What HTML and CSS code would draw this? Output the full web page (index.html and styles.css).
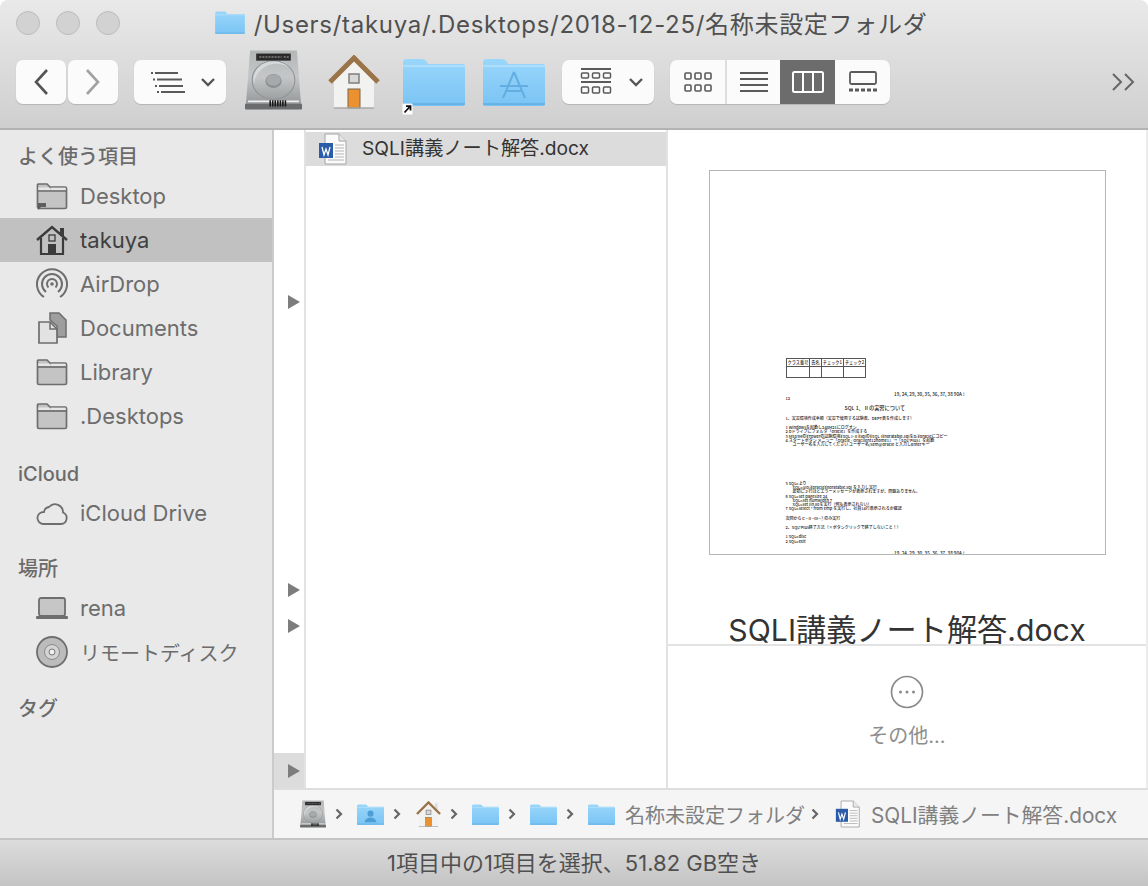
FILE: index.html
```html
<!DOCTYPE html>
<html lang="ja">
<head>
    <meta charset="UTF-8">
    <title>名称未設定フォルダ</title>
    <link rel="stylesheet" href="styles.css">
</head>
<body>

<svg class="defs" width="0" height="0">
    <defs>
        <linearGradient id="blue" x1="0" y1="0" x2="0" y2="1">
            <stop offset="0" stop-color="#9ad6fb"/>
            <stop offset="1" stop-color="#79c4f4"/>
        </linearGradient>
        <linearGradient id="metal" x1="0" y1="0" x2="0" y2="1">
            <stop offset="0" stop-color="#b4b7b8"/>
            <stop offset="0.5" stop-color="#c4c6c7"/>
            <stop offset="1" stop-color="#96999b"/>
        </linearGradient>
    </defs>
    <symbol id="folder" viewBox="0 0 62 48">
        <path d="M0 5 Q0 1 3 1 H19 Q22 1 24 4 L25 6 H60 Q62 6 62 8 V46 Q62 48 60 48 H2 Q0 48 0 46Z" fill="url(#blue)"/>
        <path d="M0 8 H62" stroke="#b6e2fc" stroke-width="1.500"/>
        <path d="M0 46 H62" stroke="#63aee2" stroke-width="1.500"/>
    </symbol>
    <symbol id="disk" viewBox="0 0 56 60">
        <path d="M5 1 H51 L55 53 H1Z" fill="url(#metal)"/>
        <path d="M9 34 A20 20 0 0 1 46 20 A22 22 0 0 0 9 34Z" fill="#d6d8d9"/>
        <ellipse cx="28" cy="30" rx="21" ry="19" fill="none" stroke="#8f9294"/>
        <ellipse cx="28" cy="31" rx="8" ry="7" fill="#8e9193"/>
        <ellipse cx="28" cy="30" rx="7" ry="5.500" fill="#a7aaac"/>
        <rect x="11" y="4" width="34" height="7" fill="#2b2b2b"/>
        <path d="M14 7.500 H36 M38 7.500 H43" stroke="#aaa" stroke-dasharray="2 1"/>
        <rect x="0" y="53" width="56" height="6" rx="1" fill="#6a6c6e"/>
        <path d="M3 51 H53" stroke="#efefef" stroke-width="1.500"/>
        <path d="M24 53 H41" stroke="#181818" stroke-width="6" stroke-dasharray="1.500 1"/>
    </symbol>
    <symbol id="house" viewBox="0 0 52 54">
        <path d="M6 24 L26 5 L46 24 V53 H6Z" fill="#f2f2f0"/>
        <rect x="39" y="5" width="6" height="14" fill="#dcdcdc"/>
        <path d="M2 27 L26 3 L50 27" fill="none" stroke="#9a7448" stroke-width="5"/>
        <rect x="21" y="19" width="10" height="9" fill="#d8d8d8" stroke="#7f7f7f" stroke-width="1.500"/>
        <rect x="20" y="34" width="12" height="19" fill="#ec9130" stroke="#77674f"/>
        <path d="M6 53 H46" stroke="#a8a8a8" stroke-width="1.500"/>
    </symbol>
    <symbol id="word" viewBox="0 0 30 32">
        <path d="M7 1 H21 L28 8 V31 H7Z" fill="#fbfbfb" stroke="#a4a4a4"/>
        <path d="M21 1 V8 H28" fill="#e8e8e8" stroke="#a4a4a4"/>
        <path d="M17 12 H26 M17 15 H26 M17 18 H26 M17 21 H26 M17 24 H26 M10 27 H26" stroke="#b4b4b4"/>
        <rect x="1" y="10" width="14" height="15" fill="#2a5caa"/>
        <path d="M4 14 L6 22 L8 16 L10 22 L12 14" fill="none" stroke="#fff" stroke-width="1.300"/>
    </symbol>
    <symbol id="side-folder" viewBox="0 0 32 28">
        <path d="M1.500 25 V3 Q1.500 2 3 2 H11 L14 5 H29 Q30.500 5 30.500 6.500 V25 Q30.500 26.500 29 26.500 H3 Q1.500 26.500 1.500 25Z" fill="#c4c4c4" stroke="#6e6e6e" stroke-width="1.700"/>
        <path d="M1.500 9 H30.500" stroke="#6e6e6e" stroke-width="1.700"/>
        <path d="M2.300 5.500 H13 L15 8 H2.300Z M15 5.800 H29.700 V8 H15Z" fill="#e6e6e6"/>
    </symbol>
    <symbol id="chev" viewBox="0 0 8 12">
        <path d="M1.500 1.500 L6 6 L1.500 10.500" fill="none" stroke="#666" stroke-width="2.200"/>
    </symbol>
</svg>

<div class="window">
    <header class="chrome">
        <div class="titlebar">
            <div class="lights"><i></i><i></i><i></i></div>
            <div class="title">
                <svg class="title-icon"><use href="#folder"/></svg>
                <span>/Users/takuya/.Desktops/2018-12-25/名称未設定フォルダ</span>
            </div>
        </div>
        <div class="toolbar">
            <div class="btn nav-btn">
                <svg width="16" height="28" viewBox="0 0 16 28"><path d="M14 2 L3 14 L14 26" fill="none" stroke="#555" stroke-width="2.600"/></svg>
            </div>
            <div class="btn nav-btn next">
                <svg width="16" height="28" viewBox="0 0 16 28"><path d="M2 2 L13 14 L2 26" fill="none" stroke="#a2a2a2" stroke-width="2.600"/></svg>
            </div>
            <div class="btn drop view-drop">
                <svg width="34" height="22" viewBox="0 0 34 22">
                    <path d="M4 2 H27 M6 8.500 H31 M8 15 H32 M10 21 H34" stroke="#5a5a5a" stroke-width="1.800"/>
                    <path d="M0 2 H2 M2 8.500 H4 M4 15 H6 M6 21 H8" stroke="#5a5a5a" stroke-width="1.800"/>
                </svg>
                <svg class="caret" width="16" height="10" viewBox="0 0 16 10"><path d="M2 2 L8 8 L14 2" fill="none" stroke="#555" stroke-width="2.400"/></svg>
            </div>
            <svg class="tool-disk"><use href="#disk"/></svg>
            <svg class="tool-house"><use href="#house"/></svg>
            <div class="tool-alias">
                <svg class="tool-folder"><use href="#folder"/></svg>
                <svg class="alias-mark" width="11" height="12" viewBox="0 0 11 12">
                    <rect x="0.500" y="0.500" width="10" height="11" rx="1" fill="#fff"/>
                    <path d="M2.500 9.500 L7.500 4 M4 3.200 H8.500 V7.500" fill="none" stroke="#111" stroke-width="1.800"/>
                </svg>
            </div>
            <svg class="tool-folder apps" viewBox="0 0 62 48">
                <use href="#folder" width="62" height="48"/>
                <path d="M31 14 L20 40 M31 14 L42 40 M17 28 H45 M24 33 H38" stroke="#62aee2" stroke-width="2" fill="none"/>
            </svg>
            <div class="btn drop arrange-drop">
                <svg width="32" height="28" viewBox="0 0 32 28">
                    <path d="M1 1 H31 M1 14 H31" stroke="#5a5a5a" stroke-width="2"/>
                    <g fill="none" stroke="#5a5a5a" stroke-width="1.500">
                        <rect x="1.500" y="5" width="7" height="5" rx="1"/><rect x="12.500" y="5" width="7" height="5" rx="1"/><rect x="23.500" y="5" width="7" height="5" rx="1"/>
                        <rect x="1.500" y="19" width="7" height="6" rx="1"/><rect x="12.500" y="19" width="7" height="6" rx="1"/><rect x="23.500" y="19" width="7" height="6" rx="1"/>
                    </g>
                </svg>
                <svg class="caret" width="16" height="10" viewBox="0 0 16 10"><path d="M2 2 L8 8 L14 2" fill="none" stroke="#555" stroke-width="2.400"/></svg>
            </div>
            <div class="btn segments">
                <div class="seg">
                    <svg width="28" height="20" viewBox="0 0 28 20">
                        <g fill="none" stroke="#5a5a5a" stroke-width="1.600">
                            <rect x="1" y="1" width="6" height="6" rx="1"/><rect x="11" y="1" width="6" height="6" rx="1"/><rect x="21" y="1" width="6" height="6" rx="1"/>
                            <rect x="1" y="13" width="6" height="6" rx="1"/><rect x="11" y="13" width="6" height="6" rx="1"/><rect x="21" y="13" width="6" height="6" rx="1"/>
                        </g>
                    </svg>
                </div>
                <div class="seg">
                    <svg width="30" height="22" viewBox="0 0 30 22"><path d="M1 2 H29 M1 8 H29 M1 14 H29 M1 20 H29" stroke="#5a5a5a" stroke-width="1.800"/></svg>
                </div>
                <div class="seg on">
                    <svg width="32" height="22" viewBox="0 0 32 22">
                        <rect x="1" y="1" width="30" height="20" rx="1.500" fill="none" stroke="#fff" stroke-width="2"/>
                        <path d="M11 1 V21 M21 1 V21" stroke="#fff" stroke-width="2"/>
                    </svg>
                </div>
                <div class="seg">
                    <svg width="30" height="22" viewBox="0 0 30 22">
                        <rect x="2" y="1" width="26" height="12" rx="1.500" fill="none" stroke="#5a5a5a" stroke-width="1.800"/>
                        <path d="M1 19 H29" stroke="#5a5a5a" stroke-width="3" stroke-dasharray="4 2"/>
                    </svg>
                </div>
            </div>
            <svg class="more" width="25" height="20" viewBox="0 0 25 20"><path d="M2 2 L10 10 L2 18 M14 2 L22 10 L14 18" fill="none" stroke="#666" stroke-width="2"/></svg>
        </div>
    </header>

    <div class="body">
        <aside class="sidebar">
            <h3 class="side-head">よく使う項目</h3>
            <div class="side-row">
                <svg class="side-icon" viewBox="0 0 32 32">
                    <use href="#side-folder" y="2" width="32" height="28"/>
                    <path d="M2 28 V23 H10 V27 H5 L2 30Z" fill="#5e5e5e"/>
                </svg>
                Desktop
            </div>
            <div class="side-row active">
                <svg class="side-icon" viewBox="0 0 32 32">
                    <path d="M1 16 L16 3 L31 16" fill="none" stroke="#3c3c3c" stroke-width="2.400"/>
                    <path d="M5 14 V30 H27 V14" fill="none" stroke="#3c3c3c" stroke-width="2.200"/>
                    <rect x="24" y="4" width="4" height="8" fill="#3c3c3c"/>
                    <rect x="13" y="11" width="6" height="6" fill="none" stroke="#3c3c3c" stroke-width="1.300"/>
                    <rect x="12" y="20" width="8" height="10" fill="#3c3c3c"/>
                </svg>
                takuya
            </div>
            <div class="side-row">
                <svg class="side-icon" viewBox="0 0 32 32">
                    <g fill="none" stroke="#6e6e6e" stroke-width="2">
                        <path d="M8 29 A15 15 0 1 1 24 29"/>
                        <path d="M10 24 A10 10 0 1 1 22 24"/>
                        <path d="M12.500 19.500 A5 5 0 1 1 19.500 19.500"/>
                    </g>
                    <circle cx="16" cy="16" r="1.800" fill="#6e6e6e"/>
                </svg>
                AirDrop
            </div>
            <div class="side-row">
                <svg class="side-icon" viewBox="0 0 32 32">
                    <path d="M14 1 H23 L30 8 V25 H21 V14 L14 8Z" fill="#9e9e9e" stroke="#6e6e6e" stroke-width="1.500"/>
                    <path d="M3 10 H14 L21 17 V31 H3Z" fill="#e2e2e2" stroke="#6e6e6e" stroke-width="1.700"/>
                    <path d="M14 10 V17 H21" fill="none" stroke="#6e6e6e" stroke-width="1.500"/>
                </svg>
                Documents
            </div>
            <div class="side-row">
                <svg class="side-icon"><use href="#side-folder"/></svg>
                Library
            </div>
            <div class="side-row">
                <svg class="side-icon"><use href="#side-folder"/></svg>
                .Desktops
            </div>

            <h3 class="side-head gap-first">iCloud</h3>
            <div class="side-row">
                <svg class="side-icon" viewBox="0 0 32 32">
                    <path d="M7 27 H25 A6 6 0 0 0 27 15.500 A8 8 0 0 0 13 10 A6 6 0 0 0 8 15 A6 6 0 0 0 7 27Z" fill="none" stroke="#6e6e6e" stroke-width="1.800"/>
                </svg>
                iCloud Drive
            </div>

            <h3 class="side-head gap">場所</h3>
            <div class="side-row">
                <svg class="side-icon" viewBox="0 0 32 32">
                    <rect x="3" y="6" width="26" height="18" rx="2" fill="#c6c6c6" stroke="#6e6e6e" stroke-width="1.800"/>
                    <rect x="0" y="24" width="32" height="3" rx="1" fill="#6e6e6e"/>
                </svg>
                rena
            </div>
            <div class="side-row ja">
                <svg class="side-icon" viewBox="0 0 32 32">
                    <circle cx="16" cy="16" r="15" fill="#bcbcbc" stroke="#6e6e6e" stroke-width="1.800"/>
                    <circle cx="16" cy="16" r="7.500" fill="#d4d4d4" stroke="#8a8a8a"/>
                    <circle cx="16" cy="16" r="3" fill="#eee" stroke="#777"/>
                </svg>
                リモートディスク
            </div>

            <h3 class="side-head gap tags">タグ</h3>
        </aside>

        <main class="main">
            <div class="columns">
                <div class="col-narrow">
                    <span class="arrow a1"></span>
                    <span class="arrow a2"></span>
                    <span class="arrow a3"></span>
                    <div class="narrow-selected"><span class="arrow"></span></div>
                </div>
                <div class="col-files">
                    <div class="file-row">
                        <svg class="file-icon"><use href="#word"/></svg>
                        <span class="file-name">SQLI講義ノート解答.docx</span>
                    </div>
                </div>
                <div class="preview">
                    <div class="preview-top">
                        <div class="doc">
                            <table class="doc-table">
                                <tr><td>クラス番号</td><td>氏名</td><td>チェック1</td><td>チェック2</td></tr>
                                <tr class="blank"><td></td><td></td><td></td><td></td></tr>
                            </table>
                            <p class="doc-right">19, 24, 29, 30, 35, 36, 37, 38 90A !</p>
                            <p class="doc-line">12</p>
                            <p class="doc-title">SQL 1、Ⅱの実習について</p>
                            <p class="doc-line">1、実習環境作成手順（実習で使用する試験表、DEPT表を作成します）</p>
                            <p class="doc-line sp">1 Windowsを起動し240M21にログオン</p>
                            <p class="doc-line">2 Dドライブにフォルダ「oracle」を作成する</p>
                            <p class="doc-line">3 MS03Mの¥Towerの試験環境¥SQL I-Ⅱ¥sqlの¥SQL I¥noratable.sqlをD:¥oracleにコピー</p>
                            <p class="doc-line">4 スタートボタン メニュー「Oracle - OraClient12home1」→「SQL*Plus」を起動</p>
                            <p class="doc-line ind">ユーザー名を入力してください ユーザー名/sem@oracle と入力しEnterキー</p>
                            <p class="doc-line big">5 SQL&gt;より</p>
                            <p class="doc-line ind">SQL&gt;@D:¥oracle¥noratable.sql を入力し実行</p>
                            <p class="doc-line ind">最初に２行ほどエラーメッセージが表示されますが、問題ありません。</p>
                            <p class="doc-line">6 SQL&gt;set pagesize 24</p>
                            <p class="doc-line ind">SQL&gt;set numwidth 7</p>
                            <p class="doc-line ind">SQL&gt;set lin 80を実行（何も表示されない）</p>
                            <p class="doc-line">7 SQL&gt;select * from emp を実行し、社員14行表示されるか確認</p>
                            <p class="doc-line sp">次回からＣ−Ⅱ−Ⅲ−⑦のみ実行</p>
                            <p class="doc-line sp">2、SQL*Plus終了方法（×ボタンクリックで終了しないこと！）</p>
                            <p class="doc-line sp">1 SQL&gt;disc</p>
                            <p class="doc-line">2 SQL&gt;exit</p>
                            <p class="doc-right end">19, 24, 29, 30, 35, 36, 37, 38 90A !</p>
                        </div>
                        <div class="preview-name">SQLI講義ノート解答.docx</div>
                    </div>
                    <div class="preview-more">
                        <svg width="34" height="34" viewBox="0 0 34 34">
                            <circle cx="17" cy="17" r="15.500" fill="none" stroke="#8a8a8a" stroke-width="1.700"/>
                            <circle cx="10.500" cy="17" r="1.500" fill="#8a8a8a"/>
                            <circle cx="17" cy="17" r="1.500" fill="#8a8a8a"/>
                            <circle cx="23.500" cy="17" r="1.500" fill="#8a8a8a"/>
                        </svg>
                        <span>その他...</span>
                    </div>
                </div>
            </div>

            <div class="pathbar">
                <svg class="crumb-disk"><use href="#disk"/></svg>
                <svg class="chev"><use href="#chev"/></svg>
                <svg class="crumb-folder" viewBox="0 0 62 48">
                    <use href="#folder" width="62" height="48"/>
                    <circle cx="31" cy="22" r="7" fill="#4e9ed6"/>
                    <path d="M17 42 Q20 31 31 31 Q42 31 45 42Z" fill="#4e9ed6"/>
                </svg>
                <svg class="chev"><use href="#chev"/></svg>
                <svg class="crumb-house"><use href="#house"/></svg>
                <svg class="chev"><use href="#chev"/></svg>
                <svg class="crumb-folder"><use href="#folder"/></svg>
                <svg class="chev"><use href="#chev"/></svg>
                <svg class="crumb-folder"><use href="#folder"/></svg>
                <svg class="chev"><use href="#chev"/></svg>
                <svg class="crumb-folder"><use href="#folder"/></svg>
                <span class="crumb-text">名称未設定フォルダ</span>
                <svg class="chev last"><use href="#chev"/></svg>
                <svg class="crumb-word"><use href="#word"/></svg>
                <span class="crumb-file">SQLI講義ノート解答.docx</span>
            </div>
        </main>
    </div>

    <footer class="statusbar">1項目中の1項目を選択、51.82 GB空き</footer>
</div>

</body>
</html>
```

FILE: styles.css
```css
* {
    box-sizing: border-box;
}

html, body {
    margin: 0;
    padding: 0;
    background: #fff;
}

body {
    font-family: Inter, "Noto Sans CJK JP", sans-serif;
    overflow: hidden;
}

.defs {
    position: absolute;
}

.window {
    width: 1148px;
    height: 886px;
    display: flex;
    flex-direction: column;
    border-radius: 8px 8px 0 0;
    overflow: hidden;
}

/* titlebar + toolbar */
.chrome {
    height: 130px;
    flex: none;
    background: linear-gradient(#e9e9e9, #cfcfcf);
    border-bottom: 2px solid #b3b3b3;
}

.titlebar {
    height: 44px;
    display: flex;
    align-items: center;
    justify-content: center;
    padding-right: 6px;
    position: relative;
}

.lights {
    position: absolute;
    left: 16px;
    top: 11px;
    display: flex;
    gap: 16px;
}

.lights i {
    width: 24px;
    height: 24px;
    border-radius: 50%;
    background: #d2d2d2;
    border: 1px solid #bcbcbc;
}

.title {
    display: flex;
    align-items: center;
    gap: 9px;
    font-size: 24px;
    letter-spacing: 0.7px;
    color: #505050;
    white-space: nowrap;
}

.title-icon {
    width: 30px;
    height: 23px;
}

.toolbar {
    height: 76px;
    display: flex;
    align-items: center;
    padding: 0 12px 0 16px;
}

.btn {
    height: 44px;
    background: #fbfbfb;
    border-radius: 7px;
    box-shadow: 0 1px 1px #b5b5b5;
    display: flex;
    align-items: center;
}

.nav-btn {
    width: 50px;
    justify-content: center;
}

.next {
    margin-left: 2px;
}

.drop {
    width: 92px;
    padding-left: 17px;
}

.caret {
    margin-left: auto;
    margin-right: 10px;
}

.view-drop {
    margin-left: 16px;
}

.tool-disk {
    width: 57px;
    height: 62px;
    margin-left: 19px;
    margin-top: -4px;
}

.tool-house {
    width: 52px;
    height: 54px;
    margin-left: 26px;
}

.tool-alias {
    position: relative;
    margin-left: 23px;
    height: 50px;
}

.tool-folder {
    width: 62px;
    height: 50px;
    display: block;
}

.alias-mark {
    position: absolute;
    left: -1px;
    bottom: -8px;
}

.apps {
    margin-left: 18px;
}

.arrange-drop {
    margin-left: 17px;
    padding-left: 18px;
}

.segments {
    margin-left: 16px;
    width: 220px;
    overflow: hidden;
}

.seg {
    width: 55px;
    height: 44px;
    display: flex;
    align-items: center;
    justify-content: center;
    border-left: 2px solid #dedede;
}

.seg:first-child,
.seg.on,
.seg.on + .seg {
    border-left: none;
}

.seg.on {
    background: #6c6c6c;
}

.more {
    margin-left: auto;
}

/* sidebar + columns */
.body {
    flex: 1;
    display: flex;
    min-height: 0;
}

.sidebar {
    width: 274px;
    flex: none;
    background: #e9e9e9;
    border-right: 2px solid #cbcbcb;
    padding-top: 8px;
}

.side-head {
    margin: 0;
    height: 36px;
    line-height: 38px;
    padding-left: 18px;
    font-size: 20px;
    font-weight: 500;
    color: #6b6b6b;
}

.side-head.gap-first {
    margin-top: 17px;
}

.side-head.gap {
    margin-top: 15px;
}

.side-head.tags {
    margin-top: 16px;
}

.side-row {
    height: 44px;
    display: flex;
    align-items: center;
    gap: 12px;
    padding-left: 36px;
    font-size: 22px;
    color: #6d6d6d;
}

.side-row.ja {
    font-size: 20px;
}

.side-row.active {
    background: #c1c1c1;
    color: #3f3f3f;
}

.side-icon {
    width: 32px;
    height: 32px;
    flex: none;
}

.main {
    flex: 1;
    min-width: 0;
    display: flex;
    flex-direction: column;
}

.columns {
    flex: 1;
    display: flex;
    min-height: 0;
}

.col-narrow {
    width: 32px;
    flex: none;
    border-right: 2px solid #e2e2e2;
    background: #fff;
    position: relative;
}

.arrow {
    width: 0;
    height: 0;
    border-left: 12px solid #7d7d7d;
    border-top: 7px solid transparent;
    border-bottom: 7px solid transparent;
    display: block;
}

.a1, .a2, .a3 {
    position: absolute;
    left: 14px;
}

.a1 { top: 165px; }
.a2 { top: 453px; }
.a3 { top: 489px; }

.narrow-selected {
    position: absolute;
    left: 0;
    right: 0;
    bottom: 0;
    height: 35px;
    background: #dcdcdc;
    display: flex;
    align-items: center;
    padding-left: 14px;
}

.col-files {
    width: 362px;
    flex: none;
    border-right: 2px solid #e2e2e2;
    padding-top: 2px;
}

.file-row {
    height: 34px;
    display: flex;
    align-items: center;
    gap: 14px;
    padding-left: 12px;
    background: #dcdcdc;
    font-size: 19.200px;
    color: #333;
    white-space: nowrap;
}

.file-name {
    padding-bottom: 5px;
}

.file-icon {
    width: 30px;
    height: 32px;
    flex: none;
}

.preview {
    flex: 1;
    min-width: 0;
    display: flex;
    flex-direction: column;
    border-right: 2px solid #ececec;
}

.preview-top {
    height: 516px;
    flex: none;
    border-bottom: 2px solid #e3e3e3;
    display: flex;
    flex-direction: column;
    align-items: center;
    padding-top: 40px;
}

.doc {
    width: 397px;
    height: 385px;
    flex: none;
    border: 1px solid #b5b5b5;
    background: #fff;
    padding: 187px 76px 0;
    color: #222;
    font-size: 4px;
    font-weight: 500;
    line-height: 4.300px;
    overflow: hidden;
    font-family: "Noto Sans CJK JP", sans-serif;
}

.doc p {
    margin: 0;
    white-space: nowrap;
}

.doc-table {
    border-collapse: collapse;
    font-size: 4.200px;
    line-height: 7px;
}

.doc-table td {
    border: 1px solid #555;
    padding: 0 1px;
    white-space: nowrap;
    height: 8px;
}

.doc-table .blank td {
    height: 11px;
}

.doc p.doc-right {
    text-align: right;
    margin: 14px 64px 0 0;
    font-size: 4.600px;
}

.doc p.doc-right.end {
    margin-top: 8px;
}

.doc p.doc-title {
    padding-left: 59px;
    font-size: 5.200px;
    margin: 5px 0 6px;
}

.doc p.sp {
    margin-top: 5px;
}

.doc p.ind {
    padding-left: 7px;
}

.doc p.big {
    margin-top: 34px;
}

.preview-name {
    margin-top: 62px;
    font-size: 30.200px;
    line-height: 26px;
    color: #333;
    white-space: nowrap;
}

.preview-more {
    flex: 1;
    display: flex;
    flex-direction: column;
    align-items: center;
    padding-top: 29px;
    gap: 11px;
    font-size: 20px;
    color: #8e8e8e;
}

.pathbar {
    height: 50px;
    flex: none;
    background: #f5f5f5;
    border-top: 2px solid #dedede;
    display: flex;
    align-items: center;
    padding-left: 26px;
    font-size: 20px;
    color: #808080;
    white-space: nowrap;
}

.chev {
    width: 8px;
    height: 12px;
    flex: none;
    margin: 0 14px 0 9px;
}

.chev.last {
    margin: 0 16px 0 6px;
}

.crumb-disk {
    width: 26px;
    height: 28px;
    flex: none;
}

.crumb-folder {
    width: 27px;
    height: 21px;
    flex: none;
}

.crumb-house {
    width: 25px;
    height: 26px;
    flex: none;
    margin-left: 1px;
}

.crumb-word {
    width: 26px;
    height: 28px;
    flex: none;
    margin-right: 10px;
}

.crumb-text {
    margin-left: 10px;
}

.crumb-file {
    font-size: 20.800px;
}

.statusbar {
    height: 48px;
    flex: none;
    background: linear-gradient(#dcdcdc, #c4c4c4);
    border-top: 2px solid #c4c4c4;
    display: flex;
    align-items: center;
    justify-content: center;
    padding-bottom: 5px;
    font-size: 22px;
    color: #505050;
}
```
